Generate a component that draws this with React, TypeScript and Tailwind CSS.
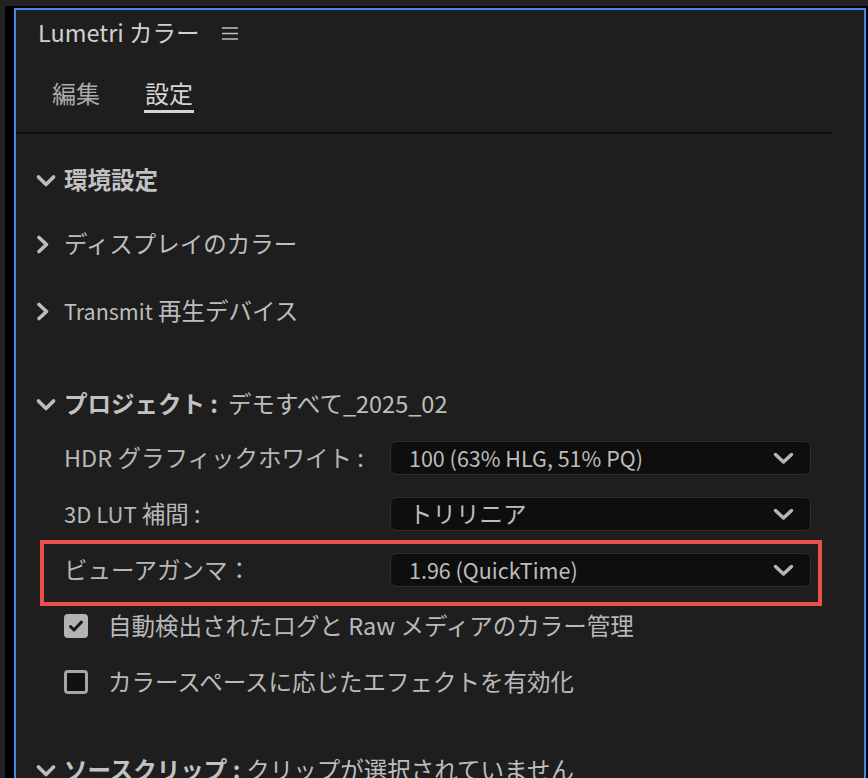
import React from "react";

const FONT = { fontFamily: '"Noto Sans CJK JP", "Noto Sans", sans-serif' };

function ChevronDown({ className = "" }: { className?: string }) {
  return (
    <svg width="20" height="13" viewBox="0 0 20 13" className={className}>
      <path d="M2.5 3 L10 10.5 L17.5 3" fill="none" stroke="currentColor" strokeWidth="3.6" strokeLinecap="round" strokeLinejoin="round" />
    </svg>
  );
}

function ChevronRight() {
  return (
    <svg width="14" height="19" viewBox="0 0 14 19">
      <path d="M3 2.5 L10.5 9.5 L3 16.5" fill="none" stroke="currentColor" strokeWidth="3.6" strokeLinecap="round" strokeLinejoin="round" />
    </svg>
  );
}

function Section({ open, children }: { open?: boolean; children: React.ReactNode }) {
  return (
    <div className="flex h-[40px] items-center pl-[20px] text-[#bdbdbd]">
      <div className="flex w-[28px] items-center">{open ? <ChevronDown /> : <ChevronRight />}</div>
      <div className="flex items-center whitespace-nowrap">{children}</div>
    </div>
  );
}

function Dropdown({ value, latin }: { value: string; latin?: boolean }) {
  return (
    <div className="flex h-[34px] w-[421px] items-center justify-between rounded-[7px] border border-[#2c2c2c] bg-[#0e0e0e] pl-[18px] pr-[16px] text-[#bcbcbc]">
      <span className={latin ? "whitespace-nowrap text-[21.5px]" : "whitespace-nowrap"}>{value}</span>
      <svg width="21" height="13" viewBox="0 0 21 13" className="text-[#b5b5b5]">
        <path d="M2.5 2.5 L10.5 10 L18.5 2.5" fill="none" stroke="currentColor" strokeWidth="3.5" strokeLinecap="round" strokeLinejoin="round" />
      </svg>
    </div>
  );
}

function Field({ label, value, latin }: { label: React.ReactNode; value: string; latin?: boolean }) {
  return (
    <div className="flex items-center">
      <div className="w-[326px] whitespace-nowrap text-[#b7b7b7]">{label}</div>
      <Dropdown value={value} latin={latin} />
    </div>
  );
}

function Check({ checked, label }: { checked?: boolean; label: string }) {
  return (
    <div className="flex h-[32px] items-center gap-[20px] pl-[48px]">
      {checked ? (
        <div className="flex h-[24px] w-[24px] items-center justify-center rounded-[4px] bg-[#b3b3b3]">
          <svg width="16" height="14" viewBox="0 0 16 14">
            <path d="M2.5 7.5 L6 11 L13.5 3" fill="none" stroke="#161616" strokeWidth="3" strokeLinecap="round" strokeLinejoin="round" />
          </svg>
        </div>
      ) : (
        <div className="h-[24px] w-[24px] rounded-[4px] border-[3px] border-[#a6a6a6] bg-[#111111]" />
      )}
      <span className="whitespace-nowrap text-[#b9b9b9]">{label}</span>
    </div>
  );
}

export default function App() {
  return (
    <div className="h-[778px] w-[868px] overflow-hidden bg-[#222222] pl-[5px] pt-[6px] text-[23.5px] leading-none" style={FONT}>
      <div className="flex h-full flex-col bg-black pl-[9px] pr-[2px] pt-[2px]">
        <div className="flex flex-1 flex-col border-2 border-b-0 border-[#4a88e0] bg-[#1e1e1e]">
          {/* header */}
          <div className="flex h-[46px] items-center gap-[22px] pl-[22px]">
            <span className="whitespace-nowrap text-[#d0d0d0]">Lumetri カラー</span>
            <svg width="16" height="13" viewBox="0 0 16 13" className="text-[#c0c0c0]">
              <path d="M0 1 H16 M0 6.5 H16 M0 12 H16" stroke="currentColor" strokeWidth="1.6" />
            </svg>
          </div>

          {/* tabs */}
          <div className="flex gap-[44px] pb-[19px] pl-[36px] pt-[23px]">
            <div className="flex flex-col">
              <span className="flex h-[28px] items-center text-[24px] text-[#ababab]">編集</span>
              <div className="mt-[3px] h-[3px]" />
            </div>
            <div className="flex flex-col items-center">
              <span className="flex h-[28px] items-center px-[1px] text-[24px] text-[#d6d6d6]">設定</span>
              <div className="mt-[3px] h-[3px] w-[50px] bg-[#d4d4d4]" />
            </div>
          </div>
          <div className="mr-[32px] h-[2px] bg-[#111111]" />

          <div className="mt-[26px]">
            <Section open>
              <span className="font-bold text-[#c2c2c2]">環境設定</span>
            </Section>
          </div>
          <div className="mt-[24px]">
            <Section>ディスプレイのカラー</Section>
          </div>
          <div className="mt-[27px]">
            <Section>
              <span className="text-[21.5px]">Transmit</span>&nbsp;再生デバイス
            </Section>
          </div>
          <div className="mt-[53px]">
            <Section open>
              <span className="font-bold text-[#c2c2c2]">プロジェクト :</span>
              <span className="ml-[10px]">デモすべて_2025_02</span>
            </Section>
          </div>

          <div className="mt-[17px] pl-[48px]">
            <Field label="HDR グラフィックホワイト :" value="100 (63% HLG, 51% PQ)" latin />
          </div>
          <div className="mt-[22px] pl-[48px]">
            <Field
              label={
                <>
                  <span className="text-[22px]">3D LUT</span> 補間 :
                </>
              }
              value="トリリニア"
            />
          </div>

          <div className="ml-[24px] mt-[9px] w-[782px] border-4 border-[#e8504e]">
            <div className="flex h-[58px] items-center pb-[6px] pl-[20px]">
              <Field label="ビューアガンマ：" value="1.96 (QuickTime)" latin />
            </div>
          </div>

          <div className="mt-[4px]">
            <Check checked label="自動検出されたログと Raw メディアのカラー管理" />
          </div>
          <div className="mt-[24px]">
            <Check label="カラースペースに応じたエフェクトを有効化" />
          </div>

          <div className="mt-[52px]">
            <Section open>
              <span className="font-bold text-[#c2c2c2]">ソースクリップ :</span>
              <span className="ml-[6px]">クリップが選択されていません</span>
            </Section>
          </div>
        </div>
      </div>
    </div>
  );
}
